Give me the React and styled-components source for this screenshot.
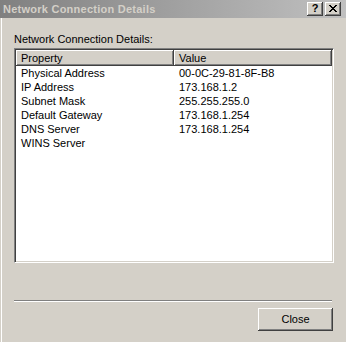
import React from "react";
import styled, { createGlobalStyle } from "styled-components";

const Global = createGlobalStyle`
  html, body { margin: 0; padding: 0; background: #d4d0c8; }
  body { font-family: "Liberation Sans", Arial, sans-serif; font-size: 11px; color: #000; }
`;

const Window = styled.div`
  width: 346px;
  height: 342px;
  background: #d4d0c8;
  display: flex;
  flex-direction: column;
  overflow: hidden;
`;

const TitleBar = styled.div`
  height: 18px;
  flex: none;
  display: flex;
  align-items: center;
  padding: 0 5px 0 3px;
  background: linear-gradient(to right, #808080, #c0c0c0);
`;

const Title = styled.div`
  flex: 1;
  color: #d4d0c8;
  font-weight: bold;
  font-size: 11px;
  letter-spacing: 0.25px;
  white-space: nowrap;
`;

const CaptionButtons = styled.div`
  display: flex;
  gap: 2px;
`;

const CaptionButton = styled.div`
  width: 16px;
  height: 14px;
  box-sizing: border-box;
  background: #d4d0c8;
  box-shadow: inset -1px -1px #404040, inset 1px 1px #ffffff, inset -2px -2px #808080;
  display: flex;
  align-items: center;
  justify-content: center;
  font-weight: bold;
  font-size: 11px;
  line-height: 1;
  padding-bottom: 1px;
`;

const Body = styled.div`
  flex: 1;
  display: flex;
  flex-direction: column;
  padding: 15px 0 0 14px;
  box-shadow: inset 1px 0 #d4d0c8, inset 2px 0 #ffffff;
`;

const Label = styled.div`
  line-height: 13px;
  height: 13px;
  margin-bottom: 2px;
`;

const ListView = styled.div`
  width: 320px;
  height: 215px;
  box-sizing: border-box;
  background: #fff;
  border: 1px solid;
  border-color: #808080 #ffffff #ffffff #808080;
  box-shadow: inset 1px 1px #404040, inset -1px -1px #d4d0c8;
  padding: 1px;
  display: flex;
  flex-direction: column;
`;

const Columns = styled.div`
  display: grid;
  grid-template-columns: 158px 158px;
`;

const HeaderCell = styled.div`
  height: 16px;
  box-sizing: border-box;
  background: #d4d0c8;
  box-shadow: inset -1px -1px #404040, inset 1px 1px #ffffff, inset -2px -2px #808080;
  padding: 0 5px;
  line-height: 16px;
  white-space: nowrap;
`;

const Cell = styled.div`
  height: 14px;
  line-height: 14px;
  padding: 0 5px;
  white-space: nowrap;
`;

const Separator = styled.div`
  width: 318px;
  height: 1px;
  margin-top: 37px;
  background: #808080;
  border-bottom: 1px solid #ffffff;
`;

const Footer = styled.div`
  display: flex;
  justify-content: flex-end;
  padding: 6px 13px 0 0;
`;

const Button = styled.div`
  width: 75px;
  height: 23px;
  box-sizing: border-box;
  background: #d4d0c8;
  box-shadow: inset -1px -1px #404040, inset 1px 1px #ffffff, inset -2px -2px #808080;
  display: flex;
  align-items: center;
  justify-content: center;
  padding-bottom: 1px;
`;

const rows = [
  ["Physical Address", "00-0C-29-81-8F-B8"],
  ["IP Address", "173.168.1.2"],
  ["Subnet Mask", "255.255.255.0"],
  ["Default Gateway", "173.168.1.254"],
  ["DNS Server", "173.168.1.254"],
  ["WINS Server", ""],
];

const CloseGlyph = () => (
  <svg width="8" height="7" viewBox="0 0 8 7" shapeRendering="crispEdges">
    <path
      fill="#000"
      d="M0 0h2v1H0zM6 0h2v1H6zM1 1h2v1H1zM5 1h2v1H5zM2 2h4v1H2zM3 3h2v1H3zM2 4h4v1H2zM1 5h2v1H1zM5 5h2v1H5zM0 6h2v1H0zM6 6h2v1H6z"
    />
  </svg>
);

export default function App() {
  return (
    <>
      <Global />
      <Window>
        <TitleBar>
          <Title>Network Connection Details</Title>
          <CaptionButtons>
            <CaptionButton>?</CaptionButton>
            <CaptionButton>
              <CloseGlyph />
            </CaptionButton>
          </CaptionButtons>
        </TitleBar>
        <Body>
          <Label>Network Connection Details:</Label>
          <ListView>
            <Columns>
              <HeaderCell>Property</HeaderCell>
              <HeaderCell>Value</HeaderCell>
              {rows.map(([k, v]) => (
                <React.Fragment key={k}>
                  <Cell>{k}</Cell>
                  <Cell>{v}</Cell>
                </React.Fragment>
              ))}
            </Columns>
          </ListView>
          <Separator />
          <Footer>
            <Button>Close</Button>
          </Footer>
        </Body>
      </Window>
    </>
  );
}
